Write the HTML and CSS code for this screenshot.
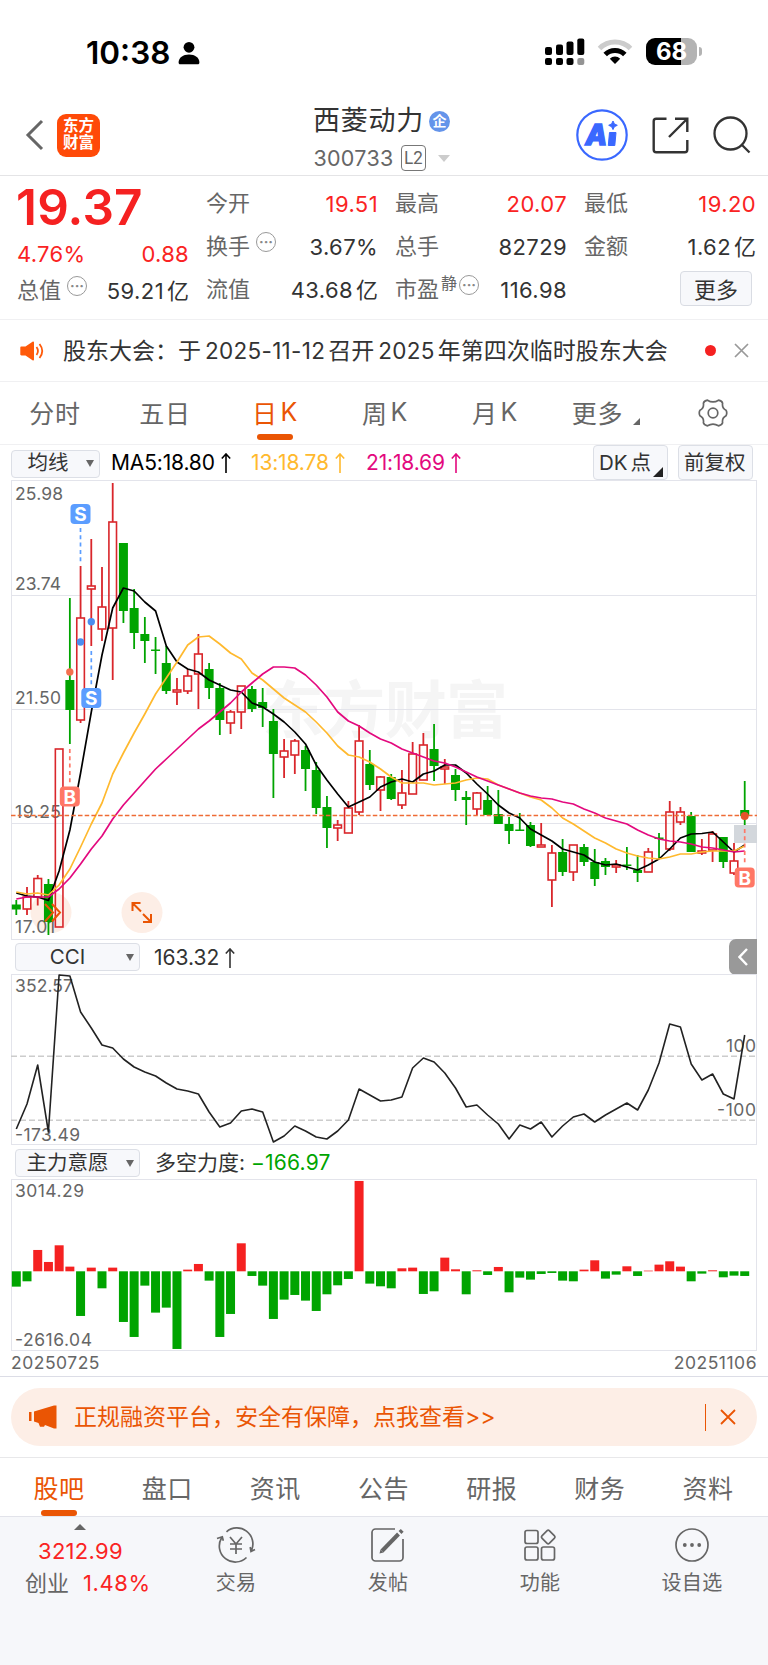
FILE: index.html
```html
<!DOCTYPE html>
<html lang="zh-CN">
<head>
  <meta charset="UTF-8">
  <title>西菱动力 300733</title>
  <link rel="stylesheet" href="styles.css">
</head>
<body>

<div class="status">
  <div class="clock">
    <span>10:38</span>
    <svg width="22" height="24" viewBox="0 0 22 24"><circle cx="11" cy="6.3" r="5.4"/><path d="M.6 21.5c0-5 4.500-8 10.400-8s10.400 3 10.400 8c0 1.200-.6 1.800-1.600 1.800H2.200c-1 0-1.600-.6-1.600-1.800z"/></svg>
  </div>
  <div class="signals">
    <svg width="40" height="28" viewBox="0 0 40 28">
      <rect x="0" y="9" width="7" height="8" rx="2"/><rect x="11" y="6.500" width="7" height="10.500" rx="2"/><rect x="21.500" y="3.500" width="7" height="13.500" rx="2"/><rect x="32.300" y="0.500" width="7" height="16.500" rx="2"/>
      <rect x="0" y="20" width="7" height="7" rx="2"/><rect x="11" y="20" width="7" height="7" rx="2"/><rect x="21.500" y="20" width="7" height="7" rx="2"/><rect x="32.300" y="20" width="7" height="7" rx="2" fill="#949494"/>
    </svg>
    <svg width="36" height="26" viewBox="0 0 36 26" fill="none" stroke-width="5">
      <path d="M2.500 9.500a22 22 0 0 1 31 0" stroke="#ccc"/>
      <path d="M8.200 15.500a14 14 0 0 1 19.600 0" stroke="#000"/>
      <path d="M12.800 19.700a7.500 7.500 0 0 1 10.400 0L18 25z" fill="#000"/>
    </svg>
    <div class="battery"><span>68</span></div>
  </div>
</div>

<header class="header">
  <div class="header-left">
    <svg width="20" height="32" viewBox="0 0 20 32"><path d="M17 2L3 16l14 14" fill="none" stroke="#666" stroke-width="3"/></svg>
    <div class="logo">东方<br>财富</div>
  </div>
  <div class="header-title">
    <div class="name">西菱动力<span class="qi">企</span></div>
    <div class="code">300733<span class="l2">L2</span><i class="caret"></i></div>
  </div>
  <div class="header-right">
    <svg width="52" height="52" viewBox="0 0 52 52">
      <circle cx="26" cy="26" r="24.700" fill="none" stroke="#3a68ff" stroke-width="2.200"/>
      <text x="9.500" y="36" class="ai">A</text>
      <path d="M33.500 23.500h6.500l-1.200 13h-6.500z" fill="#3a68ff" stroke="#3a68ff" stroke-linejoin="round"/>
      <path d="M37 12l1.400 2.900 2.900 1.400-2.900 1.400L37 20.600l-1.400-2.900-2.900-1.400 2.900-1.400z" fill="#3a68ff" stroke="#3a68ff"/>
    </svg>
    <svg width="37" height="37" viewBox="0 0 37 37" fill="none" stroke="#333" stroke-width="2.400">
      <path d="M14.500 1.700H4.200a2.500 2.500 0 0 0-2.500 2.500v28.600a2.500 2.500 0 0 0 2.500 2.500h28.600a2.500 2.500 0 0 0 2.500-2.500V23M23 1.700h12.300V15M34.500 2.500L17 20"/>
    </svg>
    <svg width="38" height="38" viewBox="0 0 38 38" fill="none" stroke="#333" stroke-width="2.300"><circle cx="17.500" cy="17.500" r="16"/><path d="M28.500 28.500l8 8"/></svg>
  </div>
</header>

<section class="quote">
  <div class="col">
    <div class="price">19.37</div>
    <div class="change"><span>4.76%</span><span>0.88</span></div>
    <div class="cap"><label>总值<i class="dots">···</i></label><b>59.21<u>亿</u></b></div>
  </div>
  <div class="col">
    <div class="row"><label>今开</label><b class="up">19.51</b></div>
    <div class="row"><label>换手<i class="dots">···</i></label><b>3.67%</b></div>
    <div class="row"><label>流值</label><b>43.68<u>亿</u></b></div>
  </div>
  <div class="col">
    <div class="row"><label>最高</label><b class="up">20.07</b></div>
    <div class="row"><label>总手</label><b>82729</b></div>
    <div class="row"><label>市盈<sup>静</sup><i class="dots tight">···</i></label><b>116.98</b></div>
  </div>
  <div class="col">
    <div class="row"><label>最低</label><b class="up">19.20</b></div>
    <div class="row"><label>金额</label><b>1.62<u>亿</u></b></div>
    <div class="row end"><button class="more">更多</button></div>
  </div>
</section>

<section class="notice">
  <svg width="24" height="20" viewBox="0 0 24 20">
    <path d="M1.500 5.500h4L12.500.8c.8-.5 1.500-.2 1.500.7v17c0 .9-.7 1.200-1.500.7L5.500 14.500h-4C.7 14.500.3 14 .3 13.300V6.700c0-.7.4-1.200 1.200-1.200z" fill="#ff5a0a"/>
    <path d="M16.500 6c1.800 2.500 1.800 5.500 0 8M19.500 3c3.400 4.300 3.400 9.700 0 14" fill="none" stroke="#ff5a0a" stroke-width="1.800"/>
  </svg>
  <p>股东大会：于<em>2025-11-12</em>召开<em>2025</em>年第四次临时股东大会</p>
  <i class="red-dot"></i>
  <svg width="15" height="15" viewBox="0 0 15 15"><path d="M1 1l13 13M14 1L1 14" stroke="#999" stroke-width="1.700"/></svg>
</section>

<nav class="periods">
  <a>分时</a>
  <a>五日</a>
  <a class="active">日<em>K</em></a>
  <a>周<em>K</em></a>
  <a>月<em>K</em></a>
  <a class="wide">更多<i class="corner"></i></a>
  <a class="gear"><svg width="30" height="28" viewBox="0 0 30 28" fill="none" stroke="#666" stroke-width="1.700" stroke-linejoin="round">
    <path d="M9.500 1.200Q15 4.600 20.500 1.200Q24 2 24.600 4.200Q23.800 9 28 11.200Q29.500 14 28 16.800Q23.800 19 24.600 23.800Q24 26 20.500 26.800Q15 23.400 9.500 26.800Q6 26 5.400 23.800Q6.200 19 2 16.800Q.5 14 2 11.200Q6.200 9 5.400 4.200Q6 2 9.500 1.200z"/><circle cx="15" cy="14" r="4.800"/></svg></a>
</nav>

<section class="ma-bar">
  <div class="select small"><span>均线</span><i></i></div>
  <div class="ma ma5">MA5:18.80<svg class="arrow" viewBox="0 0 10 20"><path d="M5 20V1M.8 5.500L5 1l4.200 4.500"/></svg></div>
  <div class="ma ma13">13:18.78<svg class="arrow" viewBox="0 0 10 20"><path d="M5 20V1M.8 5.500L5 1l4.200 4.500"/></svg></div>
  <div class="ma ma21">21:18.69<svg class="arrow" viewBox="0 0 10 20"><path d="M5 20V1M.8 5.500L5 1l4.200 4.500"/></svg></div>
  <div class="tools">
    <div class="tool">DK<span class="dian">点</span><i class="corner dark"></i></div>
    <div class="tool">前复权</div>
  </div>
</section>

<svg id="kline" class="chart" width="768" height="460" viewBox="0 480 768 460"></svg>

<section class="sub-bar">
  <div class="select"><span>CCI</span><i></i></div>
  <div class="value">163.32<svg class="arrow" viewBox="0 0 10 20"><path d="M5 20V1M.8 5.500L5 1l4.200 4.500"/></svg></div>
  <div class="fold"><svg width="10" height="18" viewBox="0 0 10 18"><path d="M9 1L1.500 9 9 17" fill="none" stroke="#fff" stroke-width="2.400"/></svg></div>
</section>

<svg id="cci" class="chart" width="768" height="171" viewBox="0 974 768 171"></svg>

<section class="sub-bar flow">
  <div class="select"><span>主力意愿</span><i></i></div>
  <div class="value">多空力度: <span class="down">−166.97</span></div>
</section>

<svg id="flow" class="chart" width="768" height="172" viewBox="0 1179 768 172"></svg>

<div class="dates"><span>20250725</span><span>20251106</span></div>

<section class="promo">
  <div class="banner">
    <svg width="28" height="24" viewBox="0 0 28 24" fill="#ea5504"><path d="M0 7h2.500v9H0zM5 6.500L25 .5h2.500v23H25L16 20l-1 1.700H11L9.500 18 5 16.500z"/></svg>
    <p>正规融资平台，安全有保障，点我查看&gt;&gt;</p>
    <i class="bar"></i>
    <svg width="16" height="16" viewBox="0 0 16 16"><path d="M1 1l14 14M15 1L1 15" stroke="#ea5504" stroke-width="1.800"/></svg>
  </div>
</section>

<nav class="tabs">
  <a class="active">股吧</a><a>盘口</a><a>资讯</a><a>公告</a><a>研报</a><a>财务</a><a>资料</a>
</nav>

<footer class="bottom">
  <div class="index">
    <i class="up-caret"></i>
    <div class="index-value">3212.99</div>
    <div class="index-name">创业<span>1.48%</span></div>
  </div>
  <div class="item">
    <svg width="40" height="36" viewBox="0 0 40 36" fill="none" stroke="#666" stroke-width="1.700">
      <path d="M10.500 4.800A16 16 0 0 1 35.500 23.500M30.500 30.500A16 16 0 0 1 5.500 11M1 11.500l5.300-1.700 1 4M39 22.500l-4 2-.8-4.500"/>
      <path d="M14 10l6 7 6-7M20 17v10M14 17h12M14 22h12"/>
    </svg>
    <span>交易</span>
  </div>
  <div class="item">
    <svg width="36" height="36" viewBox="0 0 36 36" fill="none" stroke="#666" stroke-width="1.700">
      <path d="M25 2H5.500A3.500 3.500 0 0 0 2 5.500v25A3.500 3.500 0 0 0 5.500 34h24a3.500 3.500 0 0 0 3.500-3.500V12"/>
      <path d="M12 24L28.500 7" stroke-width="4"/><path d="M30 5.500l2.200-2.200" stroke-width="4"/><path d="M9.500 26.500l1-4 3 3z" fill="#666" stroke="none"/>
    </svg>
    <span>发帖</span>
  </div>
  <div class="item">
    <svg width="36" height="36" viewBox="0 0 36 36" fill="none" stroke="#666" stroke-width="1.700">
      <rect x="3" y="3.500" width="13" height="13" rx="2"/><rect x="3" y="20" width="13" height="13" rx="2"/><rect x="19.500" y="20" width="13" height="13" rx="2"/>
      <rect x="21" y="4.800" width="10.400" height="10.400" rx="1.500" transform="rotate(45 26.200 10)"/>
    </svg>
    <span>功能</span>
  </div>
  <div class="item">
    <svg width="36" height="36" viewBox="0 0 36 36"><circle cx="18" cy="18" r="16" fill="none" stroke="#666" stroke-width="1.700"/><g fill="#666"><circle cx="10.800" cy="18" r="1.900"/><circle cx="18" cy="18" r="1.900"/><circle cx="25.200" cy="18" r="1.900"/></g></svg>
    <span>设自选</span>
  </div>
</footer>

<script src="chart.js"></script>
</body>
</html>
```
FILE: styles.css
```css
* {
  box-sizing: border-box;
}
body {
  margin: 0;
  width: 768px;
  background: #fff;
  color: #333;
  font-family: Inter, "Noto Sans CJK SC", sans-serif;
  font-size: 22px;
  text-autospace: no-autospace;
}
p {
  margin: 0;
}
em, i {
  font-style: normal;
}
svg {
  display: block;
  flex: none;
}

/* status bar */
.status {
  height: 105px;
  padding: 0 71px 0 86px;
  display: flex;
  justify-content: space-between;
}
.clock {
  display: flex;
  align-items: center;
  gap: 8px;
  height: 105px;
  font-size: 31.5px;
  font-weight: 600;
  color: #000;
}
.signals {
  display: flex;
  align-items: center;
  height: 103px;
}
.signals svg:nth-child(2) {
  margin: 0 13px 0 12px;
}
.battery {
  position: relative;
  width: 51px;
  height: 27px;
  border-radius: 9px;
  background: linear-gradient(to right, #000 35px, #b3b3b3 35px);
  color: #fff;
  font-size: 24px;
  font-weight: 700;
  line-height: 28px;
  text-align: center;
}
.battery::after {
  content: "";
  position: absolute;
  left: 53px;
  top: 9px;
  width: 3px;
  height: 9px;
  border-radius: 0 4px 4px 0;
  background: #b3b3b3;
}

/* header */
.header {
  height: 71px;
  display: grid;
  grid-template-columns: 250px 1fr 250px;
  border-bottom: 1px solid #e4e4e6;
}
.header-left {
  display: flex;
  align-items: center;
  gap: 12px;
  height: 60px;
  padding-left: 25px;
}
.logo {
  width: 43px;
  height: 43px;
  padding-top: 3px;
  border-radius: 9px;
  background: #ff4a08;
  color: #fff;
  font-size: 15.5px;
  font-weight: 700;
  line-height: 17.5px;
  text-align: center;
}
.header-title {
  padding-right: 5px;
  display: flex;
  flex-direction: column;
  align-items: center;
}
.name {
  display: flex;
  align-items: center;
  height: 32px;
  font-size: 27px;
  line-height: 28px;
  letter-spacing: 0.8px;
}
.qi {
  width: 21px;
  height: 21px;
  margin-left: 5px;
  border-radius: 50%;
  background: #6494ea;
  color: #fff;
  font-size: 14px;
  font-weight: 700;
  line-height: 20px;
  text-align: center;
  letter-spacing: 0;
}
.code {
  display: flex;
  align-items: center;
  height: 42px;
  color: #666;
  font-size: 21.5px;
  letter-spacing: 0.3px;
}
.l2 {
  width: 25px;
  height: 26px;
  margin-left: 7px;
  border: 1px solid #777;
  border-radius: 4px;
  font-size: 17px;
  line-height: 25px;
  text-align: center;
  letter-spacing: -1px;
}
.caret {
  margin-left: 12px;
  border: 6px solid transparent;
  border-top: 7px solid #ccc;
  border-bottom: 0;
}
.header-right {
  display: flex;
  align-items: center;
  justify-content: flex-end;
  height: 60px;
  padding-right: 17px;
}
.header-right svg + svg {
  margin-left: 24px;
}
.ai {
  font: italic 800 28px Inter, sans-serif;
  fill: #3a68ff;
  stroke: #3a68ff;
  stroke-width: 1.5px;
}

/* quote */
.quote {
  height: 144px;
  padding: 6px 12px 0 17px;
  display: grid;
  grid-template-columns: repeat(4, 172px);
  column-gap: 17px;
  border-bottom: 1px solid #f0f0f2;
}
.price {
  height: 51px;
  margin-left: -1px;
  color: #f52121;
  font-size: 49.5px;
  font-weight: 600;
  line-height: 51px;
  letter-spacing: 0.2px;
}
.change, .cap, .row {
  display: flex;
  align-items: center;
  justify-content: space-between;
}
.change {
  height: 41px;
  color: #fa2323;
  letter-spacing: 0.3px;
}
.cap {
  height: 33px;
}
.row {
  height: 43px;
}
.quote label {
  display: flex;
  align-items: center;
  margin-top: -1px;
  color: #666;
  line-height: 30px;
  white-space: nowrap;
}
.quote b {
  font-weight: 400;
  line-height: 30px;
  letter-spacing: 0.4px;
  white-space: nowrap;
}
.quote u {
  margin-left: 3px;
  line-height: 0;
  letter-spacing: 0;
  text-decoration: none;
}
.quote sup {
  margin: -12px 0 0 2px;
  font-size: 16px;
  line-height: 16px;
}
.up {
  color: #fa2323;
}
.dots {
  width: 20px;
  height: 20px;
  margin: -8px 0 0 6px;
  border: 1.5px solid #999;
  border-radius: 50%;
  color: #888;
  font-size: 14px;
  font-weight: 700;
  line-height: 17px;
  text-align: center;
}
.dots.tight {
  margin-left: 2px;
}
.end {
  justify-content: flex-end;
}
.more {
  width: 72px;
  height: 35px;
  margin: -3px 4px 0 0;
  padding: 0;
  border: 1px solid #d9dce3;
  border-radius: 4px;
  background: #f7f8fb;
  color: #333;
  font: 22px/29px "Noto Sans CJK SC", sans-serif;
}

/* notice */
.notice {
  height: 62px;
  padding: 0 19px 0 20px;
  display: flex;
  align-items: center;
  border-bottom: 1px solid #f0f0f2;
}
.notice p {
  flex: 1;
  margin-left: 19px;
  font-size: 23px;
  line-height: 32px;
  white-space: nowrap;
}
.notice em {
  margin: 0 3px 0 4px;
  font-size: 22.5px;
  line-height: 0;
  letter-spacing: 0.3px;
}
.red-dot {
  width: 11px;
  height: 11px;
  margin-right: 18px;
  border-radius: 50%;
  background: #f52121;
}

/* period tabs */
.periods {
  height: 63px;
  display: grid;
  grid-template-columns: repeat(5, 110px) 112px 106px;
  border-bottom: 1px solid #f0f0f2;
}
.periods a {
  position: relative;
  display: flex;
  align-items: center;
  justify-content: center;
  padding-bottom: 2px;
  color: #666;
  font-size: 25px;
  letter-spacing: 0.7px;
}
.periods .gear {
  padding-right: 5px;
  padding-bottom: 0;
}
.periods em {
  margin-left: 3px;
}
.periods .active, .tabs .active {
  color: #ea5504;
}
.active::after {
  content: "";
  position: absolute;
  left: 50%;
  bottom: 4px;
  width: 36px;
  height: 6px;
  margin-left: -18px;
  border-radius: 3px;
  background: #ea5504;
}
.corner {
  width: 0;
  height: 0;
  margin: 19px 0 0 10px;
  border-left: 7px solid transparent;
  border-bottom: 7px solid #666;
}

/* indicator bars */
.ma-bar {
  height: 35px;
  padding: 0 15px 0 11px;
  display: flex;
  align-items: center;
}
.select {
  width: 125px;
  height: 28px;
  padding-right: 5px;
  display: flex;
  align-items: center;
  border: 1px solid #dcdfe6;
  border-radius: 4px;
  background: #f7f8fb;
  font-size: 20.5px;
  line-height: 24px;
}
.select span {
  flex: 1;
  padding-right: 7px;
  text-align: center;
}
.select i, .tool i {
  flex: none;
}
.select i {
  border: 4.5px solid transparent;
  border-top: 7px solid #666;
  border-bottom: 0;
}
.select.small {
  width: 89px;
  margin-top: 2px;
}
.small span {
  margin-top: -1px;
  padding-right: 2px;
}
.ma {
  display: flex;
  align-items: center;
  font-size: 21px;
  line-height: 36px;
  letter-spacing: -0.15px;
}
.ma5 {
  width: 140px;
  padding-left: 11px;
  color: #000;
}
.ma13 {
  width: 115px;
  padding-left: 11px;
  color: #ffb92e;
}
.ma21 {
  padding-left: 11px;
  color: #e3097e;
}
.arrow {
  width: 10px;
  height: 20px;
  margin-left: 6px;
  fill: none;
  stroke: currentColor;
  stroke-width: 1.6;
}
.tools {
  display: flex;
  gap: 10px;
  margin-left: auto;
}
.tool {
  position: relative;
  width: 75px;
  height: 35px;
  padding-left: 5px;
  border: 1px solid #dcdfe6;
  border-radius: 4px;
  background: #f7f8fb;
  font-size: 20.5px;
  line-height: 34px;
  white-space: nowrap;
}
.dian {
  margin-left: 3px;
}
.tool .corner {
  position: absolute;
  right: 4px;
  bottom: 2px;
  margin: 0;
  border-left-width: 10px;
  border-bottom: 10px solid #222;
}
.sub-bar {
  height: 34px;
  padding: 0 11px 0 15px;
  display: flex;
  align-items: center;
}
.value {
  display: flex;
  align-items: center;
  margin: 1px 0 0 14px;
  font-size: 21px;
  line-height: 28px;
  white-space: pre;
}
.value .arrow {
  margin-left: 6px;
}
.fold {
  width: 28px;
  height: 36px;
  margin-left: auto;
  display: flex;
  align-items: center;
  justify-content: center;
  border-radius: 7px 0 0 7px;
  background: #999;
}
.flow {
  padding-top: 2px;
}
.flow .value {
  margin: 0 0 0 15px;
}
.down {
  color: #00a400;
  letter-spacing: 0.2px;
}

/* charts */
.chart text {
  fill: #666;
  font-size: 17.5px;
}
.chart .watermark {
  fill: #f5f5f5;
  font-size: 62px;
  font-weight: 700;
}
.chart .mark {
  fill: #fff;
  font-size: 19px;
  font-weight: 700;
  text-anchor: middle;
}
.dates {
  height: 26px;
  padding: 0 11px;
  display: flex;
  justify-content: space-between;
  border-bottom: 1px solid #dcdde6;
  color: #666;
  font-size: 17.5px;
  line-height: 23px;
  letter-spacing: 0.5px;
}

/* promo */
.promo {
  height: 81px;
  padding: 11px 11px 0;
  border-bottom: 1px solid #e8e8ea;
}
.banner {
  height: 58px;
  padding: 0 21px 0 18px;
  display: flex;
  align-items: center;
  border-radius: 29px;
  background: #fdeee6;
  color: #ea5504;
}
.banner p {
  flex: 1;
  margin: -4px 0 0 17px;
  font-size: 23px;
}
.bar {
  width: 1.5px;
  height: 27px;
  margin-right: 14px;
  background: #ea5504;
}

/* info tabs */
.tabs {
  height: 59px;
  padding: 0 6px 0 5px;
  display: grid;
  grid-template-columns: repeat(7, 1fr);
  border-bottom: 1px solid #e2e3ea;
}
.tabs a {
  position: relative;
  display: flex;
  align-items: center;
  justify-content: center;
  color: #666;
  font-size: 25px;
  letter-spacing: 0.5px;
}
.tabs .active::after {
  bottom: 0;
}

/* bottom bar */
.bottom {
  height: 148px;
  display: grid;
  grid-template-columns: 160px repeat(4, 152px);
  background: #f6f7fa;
  color: #666;
}
.index {
  padding-top: 7px;
}
.up-caret {
  display: block;
  width: 12px;
  margin-left: 74px;
  border: 6px solid transparent;
  border-bottom: 6px solid #666;
  border-top: 0;
}
.index-value {
  height: 36px;
  margin-left: 38px;
  color: #fa2323;
  line-height: 42px;
  letter-spacing: 0.3px;
}
.index-name {
  margin-left: 25px;
  line-height: 34px;
  white-space: nowrap;
}
.index-name span {
  margin-left: 14px;
  color: #fa2323;
  letter-spacing: 0.6px;
}
.item {
  padding-top: 10px;
  display: flex;
  flex-direction: column;
  align-items: center;
  font-size: 20px;
  letter-spacing: 0.3px;
  line-height: 41px;
}
```
FILE: chart.js
```js
const RED = '#d9262b';
const GREEN = '#00a400';
const GRID = '#e3e4eb';
const x = i => 16.3 + i * 10.712;

// [color, high, body top, body bottom, low]
const candles = [
  ['g',900,904.5,909.5,915],['r',887,897,909,915],['r',875,878.5,897,905.5],['g',879,884,922,935],['r',749,749,927,927],
  ['g',598,680,710,744],['r',566,618,720,723],['r',539,586,589,646],['r',567,607,629,641],['r',483,522,628,680],
  ['g',543,543,611,623],['g',589,608,633,649],['g',617,634,641,663],['g',637,649.5,651,674],['g',646,663,691,694],
  ['r',678,690,692,705],['r',669,676,691,694],['r',634,654,674,709],['g',663,669,688,699],['g',683,688,720,735],
  ['r',710,712,723,734],['r',686,686,712,729],['g',686,689,709,712],['g',688,702,708,727],['g',709,721,754,798],
  ['r',739,751,757,778],['r',739,741,755,774],['g',746,750,769,791],['g',762,770,808,814],['g',796,807,828,848],
  ['r',820,825,828,841],['r',801,808,833,833],['r',725,741,812,815],['g',750,764,785,790],['r',776,777,790,811],
  ['g',774,777,799,800],['r',770,793,805,809],['r',742,754,794,794],['r',733,745,780,780],['g',724,749,766,781],
  ['r',759,767,769,784],['g',769,775,790,801],['g',791,797,800,825],['r',792,793,809,815],['g',786,800,815,815],
  ['g',790,814,824,824],['g',817,824,831,844],['g',813,829.5,831,831],['g',822,825,846,847],['r',823,845,847,847],
  ['r',845,853,880,907],['g',839,852,872,876],['r',845,845,872,881],['g',844,847,862,866],['g',849,862,879,886],
  ['g',858,861,867,875],['r',860,865,867,873],['g',847,864.5,866,870],['g',855,870,873,882],['r',848,852,872,872],
  ['g',833,837.5,839,858],['r',801,812,849,851],['r',807,812,822,825],['g',812,816,852,852],['r',839,851,853,855],
  ['r',831,834,850,862],['g',837,837,862,868],['r',843,861,873,875],['g',781,810,816,825]
];

const ma5 = [893,896,897,900.5,871,830,773,712,655,608,588,591,602,611,646,662,669,672,680,685,690,692,703,707,714,722,732,744,765,780,794,807,802,797,787,782,779,782,774,771,765,765,773,784,794,805,813,818,829,835,841,849,852,855,862,865,864,867,870,865,859,849,838,834,833.5,832,842,852,845];
const ma13 = [892,894,893,895,885,869,847,824,803,774,753,733,714,694,678,662,645,637,636,644,653,659,673,680,689,698,705,712,722,733,746,755,757,762,769,777,783,783,783,785,784,783,780,778,779,785,789,793,797,800,808,818,824,831,838,843,849,853,856,858,859,857,854,854,852,851,851,851,846];
const ma21 = [899,897,897,897,889,878,864,849,836,819,805,793,781,769,759,749,739,729,721,712,703,692,683,674,667,667,668,675,685,697,712,721,726,733,739,743,749,753,757,761,763,767,772,777,781,785,789,793,796,798,799,802,804,809,813,818,821,824,830,835,839,841,842,844,847,848,850,852,851];

const cci = [1129,1104,1065,1132,975,976,1012,1028,1045,1048,1059,1067,1072,1076,1083,1089,1091,1094,1112,1127,1123,1111,1109,1112,1142,1136,1126,1131,1137,1139,1131,1120,1089,1095,1101,1100,1097,1068,1058,1062,1073,1088,1107,1105,1115,1124,1139,1125,1129,1122,1137,1126,1117,1114,1122,1115,1109,1103,1110,1090,1063,1024,1027,1064,1080,1074,1094,1099,1035];

const flow = [-46,-30,64,28,78,14,-134,11,-51,11,-152,-197,-43,-124,-109,-233,5,22,-28,-197,-128,84,-14,-43,-143,-85,-71,-88,-119,-69,-42,-23,271,-37,-45,-51,9,11,-68,-60,41,6,-69,3,-11,13,-63,-19,-25,-8,-5,-28,-30,5,33,-22,-10,15,-14,2,20,30,14,-30,-7,3,-18,-13,-14];

const path = (values, color, width) =>
  `<polyline points="${values.map((v, i) => x(i).toFixed(1) + ',' + v).join(' ')}" fill="none" stroke="${color}" stroke-width="${width}" stroke-linejoin="round"/>`;
const hline = (y, color, dash = 'none', width = 1) =>
  `<path d="M11 ${y}H757" stroke="${color}" stroke-width="${width}" stroke-dasharray="${dash}"/>`;
const frame = (top, bottom) =>
  `<rect x="11.5" y="${top}" width="745" height="${bottom - top}" fill="none" stroke="${GRID}"/>`;
const label = (text, left, y, width) =>
  `<text x="${left}" y="${y}" textLength="${width}">${text}</text>`;

function drawCandle([color, high, top, bottom, low], i) {
  const cx = x(i);
  if (color === 'g') {
    return `<path d="M${cx} ${high}V${low}" stroke="${GREEN}" stroke-width="1.8"/>` +
      `<rect x="${cx - 4.5}" y="${top}" width="9" height="${bottom - top}" fill="${GREEN}"/>`;
  }
  return `<path d="M${cx} ${high}V${top}M${cx} ${bottom}V${low}" stroke="${RED}" stroke-width="1.8"/>` +
    `<rect x="${cx - 3.8}" y="${top}" width="7.6" height="${bottom - top}" fill="none" stroke="${RED}" stroke-width="1.6"/>`;
}

function marker(letter, cx, y, color, from, to) {
  return `<path d="M${cx} ${from}V${to}" stroke="${color}" stroke-width="1.7" stroke-dasharray="4 3.3"/>` +
    `<rect x="${cx - 10}" y="${y}" width="20" height="20" rx="4" fill="${color}"/>` +
    `<text class="mark" x="${cx}" y="${y + 17}">${letter}</text>`;
}

document.getElementById('kline').innerHTML =
  '<text class="watermark" x="262" y="733" textLength="246">东方财富</text>' +
  frame(480.5, 939.5) + hline(595.5, GRID) + hline(709.5, GRID) + hline(823.5, GRID) +
  '<circle cx="51" cy="912.5" r="20.5" fill="#fdeee6"/><circle cx="142" cy="912.5" r="20.5" fill="#fdeee6"/>' +
  label('25.98', 15, 500, 48) + label('23.74', 15, 589.5, 46) + label('21.50', 15, 704, 46) +
  label('19.25', 15, 818, 46) + label('17.01', 15, 933, 40) +
  candles.map(drawCandle).join('') +
  path(ma5, '#000', 1.7) + path(ma13, '#ffb92e', 1.7) + path(ma21, '#e3097e', 1.7) +
  hline(815.5, '#ee6b35', '4.5 2.2', 1.4) +
  '<path d="M45 904l8 8.5-8 9M52 904l8 8.5-8 9M132.5 911v-8h8M133 903.500l8 8M151 914v8h-8M143 914l8 8" fill="none" stroke="#ea5504" stroke-width="2"/>' +
  '<rect x="734" y="825" width="23" height="18" fill="#d3d7dc"/>' +
  marker('S', 80.5, 504, '#5b9dff', 528, 562) + marker('S', 91.3, 688, '#5b9dff', 651, 685) +
  marker('B', 69.8, 786.5, '#ff7766', 749, 784) + marker('B', 744.7, 867.5, '#ff7766', 829, 863) +
  '<circle cx="80.5" cy="642" r="3.7" fill="#4b8df0"/><circle cx="91.3" cy="621.7" r="3.7" fill="#4b8df0"/>' +
  '<circle cx="69.8" cy="672" r="3.7" fill="#f4704f"/><circle cx="744.7" cy="816" r="4" fill="#e5532b"/>';

document.getElementById('cci').innerHTML =
  frame(974.5, 1144.5) + hline(1056.3, '#ccc', '6 3', 1.4) + hline(1120.3, '#ccc', '6 3', 1.4) +
  label('352.57', 15, 992, 58) + label('-173.49', 15, 1141, 65) +
  label('100', 726, 1052, 30) + label('-100', 717, 1116, 39) +
  path(cci, '#222', 1.6);

document.getElementById('flow').innerHTML =
  frame(1179.5, 1350.5) +
  label('3014.29', 15, 1197, 69) + label('-2616.04', 15, 1346, 77) +
  flow.map((v, i) => {
    const h = Math.abs(v) / 3;
    return `<rect x="${x(i) - 4.5}" y="${v > 0 ? 1271.3 - h : 1271.3}" width="9" height="${h}" fill="${v > 0 ? '#f52121' : GREEN}"/>`;
  }).join('');
```
